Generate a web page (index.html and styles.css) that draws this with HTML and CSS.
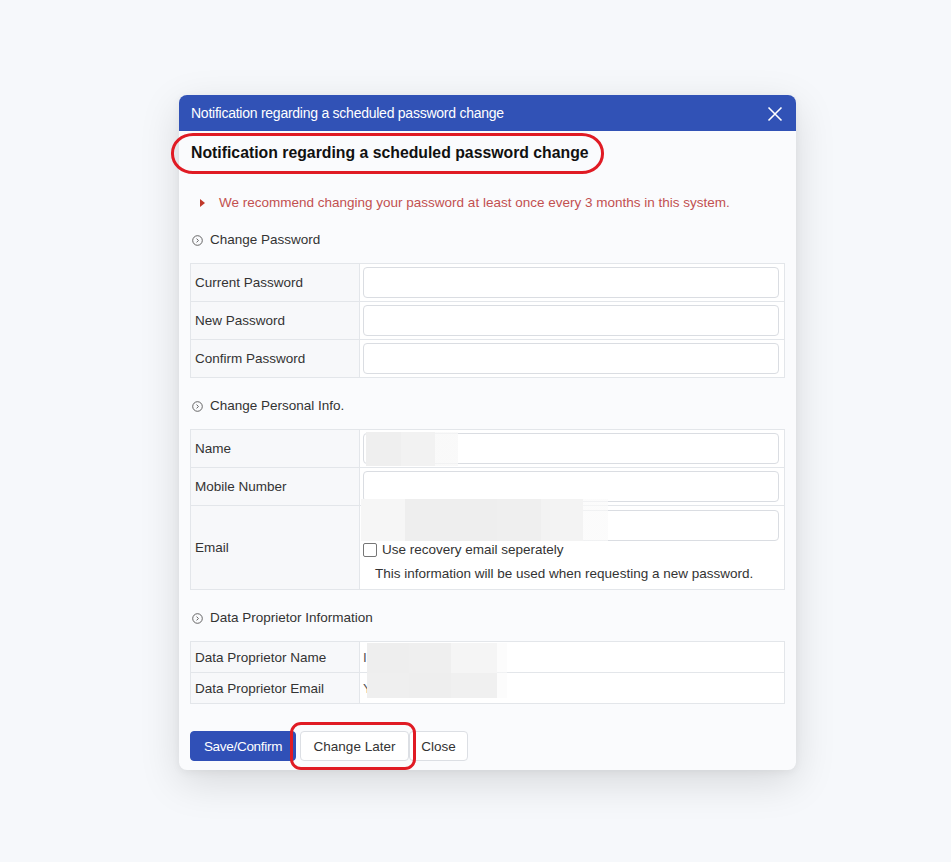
FILE: index.html
```html
<!DOCTYPE html>
<html>
<head>
<meta charset="utf-8">
<link rel="stylesheet" href="styles.css">
</head>
<body>
<div class="modal">
  <div class="modal-head">
    <span class="modal-head-title">Notification regarding a scheduled password change</span>
    <svg class="close-x" width="16" height="16" viewBox="0 0 16 16"><path d="M1.5 1.5 L14.5 14.5 M14.5 1.5 L1.5 14.5" stroke="#fff" stroke-width="1.6" fill="none"/></svg>
  </div>
  <div class="modal-body">
    <div class="title-wrap">
      <h2 class="title">Notification regarding a scheduled password change</h2>
      <span class="mark mark-title"></span>
    </div>
    <p class="notice"><span class="tri"></span>We recommend changing your password at least once every 3 months in this system.</p>

    <div class="section-head"><svg class="circ" width="11" height="11" viewBox="0 0 11 11"><circle cx="5.5" cy="5.5" r="4.8" stroke="#555" stroke-width="0.9" fill="none"/><path d="M4.6 3.6 L6.4 5.5 L4.6 7.4" stroke="#555" stroke-width="0.9" fill="none"/></svg>Change Password</div>
    <table class="form-table">
      <tr><td class="lbl">Current Password</td><td class="val"><div class="inp"></div></td></tr>
      <tr><td class="lbl">New Password</td><td class="val"><div class="inp"></div></td></tr>
      <tr><td class="lbl">Confirm Password</td><td class="val"><div class="inp"></div></td></tr>
    </table>

    <div class="section-head"><svg class="circ" width="11" height="11" viewBox="0 0 11 11"><circle cx="5.5" cy="5.5" r="4.8" stroke="#555" stroke-width="0.9" fill="none"/><path d="M4.6 3.6 L6.4 5.5 L4.6 7.4" stroke="#555" stroke-width="0.9" fill="none"/></svg>Change Personal Info.</div>
    <table class="form-table">
      <tr><td class="lbl">Name</td><td class="val rel"><div class="inp"></div><span class="blur blur-name"></span></td></tr>
      <tr><td class="lbl">Mobile Number</td><td class="val"><div class="inp"></div></td></tr>
      <tr class="email-row"><td class="lbl">Email</td><td class="val rel">
        <div class="inp"></div>
        <span class="blur blur-email"></span>
        <div class="chk-line"><span class="chk"></span>Use recovery email seperately</div>
        <div class="info">This information will be used when requesting a new password.</div>
      </td></tr>
    </table>

    <div class="section-head"><svg class="circ" width="11" height="11" viewBox="0 0 11 11"><circle cx="5.5" cy="5.5" r="4.8" stroke="#555" stroke-width="0.9" fill="none"/><path d="M4.6 3.6 L6.4 5.5 L4.6 7.4" stroke="#555" stroke-width="0.9" fill="none"/></svg>Data Proprietor Information</div>
    <table class="form-table small">
      <tr><td class="lbl">Data Proprietor Name</td><td class="val rel txt">I<span class="blur blur-dp1"></span></td></tr>
      <tr><td class="lbl">Data Proprietor Email</td><td class="val rel txt">Y<span class="blur blur-dp2"></span></td></tr>
    </table>

    <div class="btns">
      <button class="btn primary">Save/Confirm</button>
      <div class="later-wrap">
        <button class="btn later">Change Later</button>
        <span class="mark mark-btn"></span>
      </div>
      <button class="btn close">Close</button>
    </div>
  </div>
</div>
</body>
</html>
```

FILE: styles.css
```css
* { box-sizing: border-box; }
html, body { margin: 0; padding: 0; }
body {
  background: #f6f8fb;
  font-family: "Liberation Sans", Arial, sans-serif;
  font-size: 13.5px;
  color: #333;
  height: 862px;
  padding: 95px 0 0 179px;
}
.modal {
  width: 617px;
  background: #fafbfd;
  border-radius: 8px;
  box-shadow: 0 12px 40px rgba(0,0,0,0.13), 0 2px 8px rgba(0,0,0,0.05);
}
.modal-head {
  height: 36px;
  background: #3152b6;
  border-radius: 8px 8px 0 0;
  display: flex;
  align-items: center;
  justify-content: space-between;
  padding: 0 13px 0 12px;
  color: #fff;
  font-size: 14px;
}
.modal-head-title { letter-spacing: -0.25px; }
.close-x { display: block; margin-top: 1px; }
.modal-body {
  padding: 12px 11px 9px 11px;
}
.title-wrap { position: relative; }
.title {
  margin: 0 0 0 1px;
  font-size: 15.8px;
  font-weight: bold;
  line-height: 20px;
  color: #111;
}
.mark {
  position: absolute;
  border: 3px solid #e01b24;
  pointer-events: none;
}
.mark-title {
  left: -19px;
  top: -10px;
  width: 433px;
  height: 41px;
  border-radius: 22px / 20px;
}
.notice {
  margin: 30px 0 0 0;
  line-height: 20px;
  color: #c25050;
  padding-left: 10px;
  display: flex;
  align-items: center;
}
.tri {
  width: 0; height: 0;
  border-top: 4px solid transparent;
  border-bottom: 4px solid transparent;
  border-left: 5px solid #c0392b;
  margin-right: 14px;
}
.section-head {
  margin-top: 18px;
  line-height: 20px;
  display: flex;
  align-items: center;
  padding-left: 2px;
  color: #333;
}
.notice + .section-head { margin-top: 17px; }
.circ { margin-right: 7px; display: block; }
.form-table {
  margin-top: 13px;
  width: 595px;
  border-collapse: collapse;
  background: #fff;
}
.form-table td {
  border: 1px solid #e3e6ea;
  height: 38px;
  padding: 0;
}
.form-table .lbl {
  width: 169px;
  background: #f7f8fa;
  padding-left: 4px;
  color: #333;
}
.form-table .val {
  padding: 0 5px 0 3px;
  background: #fff;
}
.rel { position: relative; }
.inp {
  height: 31px;
  border: 1px solid #dadde2;
  border-radius: 4px;
  background: #fff;
}
.email-row td { height: 84px; }
.email-row .val { vertical-align: top; padding-top: 4px; }
.chk-line {
  display: flex;
  align-items: center;
  margin-top: 0px;
  line-height: 18px;
}
.chk {
  width: 14px; height: 14px;
  border: 1px solid #767676;
  border-radius: 2px;
  background: #fff;
  margin-right: 5px;
}
.info {
  margin-top: 6px;
  padding-left: 12px;
  line-height: 18px;
}
.form-table.small td { height: 31px; }
.txt { color: #555; padding-left: 5px; }
.blur {
  position: absolute;
  pointer-events: none;
}
.blur-name {
  left: 6px; top: 2px; width: 92px; height: 34px;
  background: linear-gradient(90deg, #efefef 0 38%, #f2f2f2 38% 75%, rgba(248,248,248,0.8) 75% 100%);
}
.blur-email {
  left: 1px; top: -7px; width: 247px; height: 42px;
  background: linear-gradient(90deg, #f6f6f6 0 18%, #eeeeee 18% 55%, #efefef 55% 73%, #f3f3f3 73% 90%, rgba(250,250,250,0.7) 90% 100%);
}
.blur-dp1 {
  left: 7px; top: 1px; width: 140px; height: 30px;
  background: linear-gradient(90deg, #eeeeee 0 30%, #efefef 30% 60%, #f5f5f5 60% 93%, rgba(250,250,250,0.6) 93% 100%);
}
.blur-dp2 {
  left: 7px; top: 0; width: 140px; height: 25px;
  background: linear-gradient(90deg, #efefef 0 30%, #eeeeee 30% 60%, #f0f0f0 60% 93%, rgba(250,250,250,0.6) 93% 100%);
}
.btns {
  margin-top: 27px;
  display: flex;
  align-items: center;
}
.btn {
  height: 30px;
  font-family: "Liberation Sans", Arial, sans-serif;
  font-size: 13.5px;
  border-radius: 4px;
  border: 1px solid #dcdfe4;
  background: #fff;
  color: #333;
  padding: 0;
  cursor: pointer;
}
.primary {
  width: 106px;
  background: #3050b7;
  border-color: #3050b7;
  color: #fff;
  letter-spacing: -0.3px;
}
.later-wrap { position: relative; margin-left: 4px; }
.later { width: 109px; display: block; }
.mark-btn {
  left: -10px; top: -9px; width: 126px; height: 48px;
  border-radius: 11px;
}
.close { width: 59px; }
```
